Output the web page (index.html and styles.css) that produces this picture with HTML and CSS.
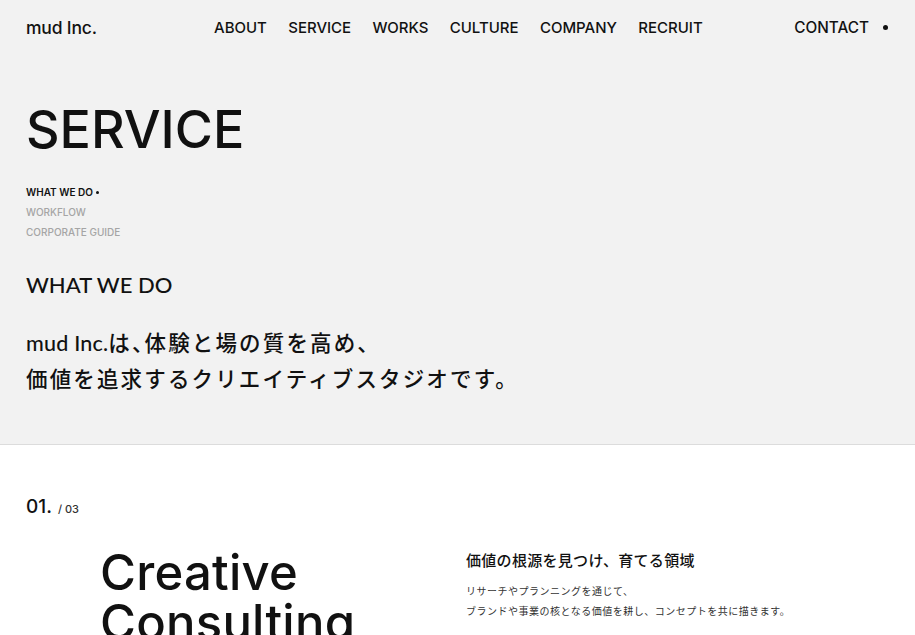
FILE: index.html
```html
<!DOCTYPE html>
<html lang="ja">
<head>
<meta charset="utf-8">
<title>SERVICE | mud Inc.</title>
<link rel="stylesheet" href="styles.css">
</head>
<body>
<header class="header">
  <div class="logo">mud Inc.</div>
  <nav class="gnav">
    <a href="#">ABOUT</a>
    <a href="#">SERVICE</a>
    <a href="#">WORKS</a>
    <a href="#">CULTURE</a>
    <a href="#">COMPANY</a>
    <a href="#">RECRUIT</a>
  </nav>
  <a class="contact" href="#">CONTACT<span class="dot"></span></a>
</header>
<section class="hero">
  <h1 class="page-title">SERVICE</h1>
  <ul class="subnav">
    <li class="active">WHAT WE DO<span class="mini-dot"></span></li>
    <li>WORKFLOW</li>
    <li>CORPORATE GUIDE</li>
  </ul>
  <h2 class="sec-title">WHAT WE DO</h2>
  <p class="lead"><span class="lead-en">mud Inc.</span>は<span class="tight">、</span>体験と場の質を高め、<br>価値を追求するクリエイティブスタジオです。</p>
</section>
<section class="services">
  <div class="count"><span class="num">01.</span><span class="total">/ 03</span></div>
  <div class="feature">
    <h3 class="feature-title">Creative<br>Consulting</h3>
    <div class="feature-body">
      <h4 class="feature-head">価値の根源を見つけ、育てる領域</h4>
      <p class="feature-text">リサーチやプランニングを通じて、<br>ブランドや事業の核となる価値を耕し、コンセプトを共に描きます。</p>
    </div>
  </div>
</section>
</body>
</html>
```
FILE: styles.css
```css
* { box-sizing: border-box; }
html, body { margin: 0; padding: 0; }
body {
  font-family: Inter, "Noto Sans CJK JP", sans-serif;
  color: #111;
  background: #fff;
  overflow: hidden;
}
a { color: inherit; text-decoration: none; }
h1, h2, h3, h4, p, ul { margin: 0; padding: 0; }
ul { list-style: none; }

.header {
  display: flex;
  align-items: center;
  height: 55px;
  padding: 0 27px 0 26px;
  background: #f2f2f2;
}
.logo {
  width: 188px;
  font-size: 17.5px;
  font-weight: 500;
  letter-spacing: -0.01em;
}
.gnav {
  display: flex;
  gap: 21.3px;
  font-size: 15px;
  font-weight: 500;
}
.contact {
  margin-left: auto;
  display: flex;
  align-items: center;
  font-size: 15.3px;
  font-weight: 500;
}
.dot {
  width: 5px;
  height: 5px;
  border-radius: 50%;
  background: #111;
  margin-left: 14px;
}

.hero {
  background: #f2f2f2;
  padding: 49px 26px 47px;
  border-bottom: 1px solid #dcdcdc;
}
.page-title {
  font-size: 52px;
  line-height: 1;
  font-weight: 500;
  height: 52px;
}
.subnav {
  margin-top: 26px;
  font-size: 10px;
  line-height: 20px;
  font-weight: 500;
  color: #a5a5a5;
}
.subnav .active {
  color: #111;
  font-weight: 600;
  display: flex;
  align-items: center;
}
.mini-dot {
  width: 3px;
  height: 3px;
  border-radius: 50%;
  background: #111;
  margin-left: 3px;
}
.sec-title {
  margin-top: 28px;
  font-family: Lato, "Noto Sans CJK JP", sans-serif;
  font-size: 22px;
  line-height: 30px;
  font-weight: 500;
}
.lead {
  margin-top: 25px;
  font-family: Lato, "Noto Sans CJK JP", sans-serif;
  font-size: 21.5px;
  line-height: 36px;
  font-weight: 500;
  letter-spacing: 0.1em;
}
.lead-en {
  letter-spacing: 0.01em;
}
.lead .tight {
  letter-spacing: -0.42em;
}

.services {
  padding: 50px 26px 0;
}
.count {
  display: flex;
  align-items: baseline;
  gap: 6px;
  line-height: 24px;
}
.num {
  font-size: 19px;
  font-weight: 500;
}
.total {
  font-size: 11px;
  font-weight: 500;
  color: #333;
}
.feature {
  display: grid;
  grid-template-columns: 366px 1fr;
  padding-left: 74px;
  margin-top: 27px;
}
.feature-title {
  font-size: 49px;
  line-height: 50px;
  font-weight: 500;
  letter-spacing: 0.005em;
}
.feature-head {
  font-family: "Noto Sans CJK JP", sans-serif;
  font-size: 15px;
  line-height: 24px;
  font-weight: 500;
  letter-spacing: 0.02em;
}
.feature-text {
  margin-top: 9px;
  font-family: "Noto Sans CJK JP", sans-serif;
  font-size: 10px;
  line-height: 20px;
  letter-spacing: 0.05em;
  color: #333;
}
```
